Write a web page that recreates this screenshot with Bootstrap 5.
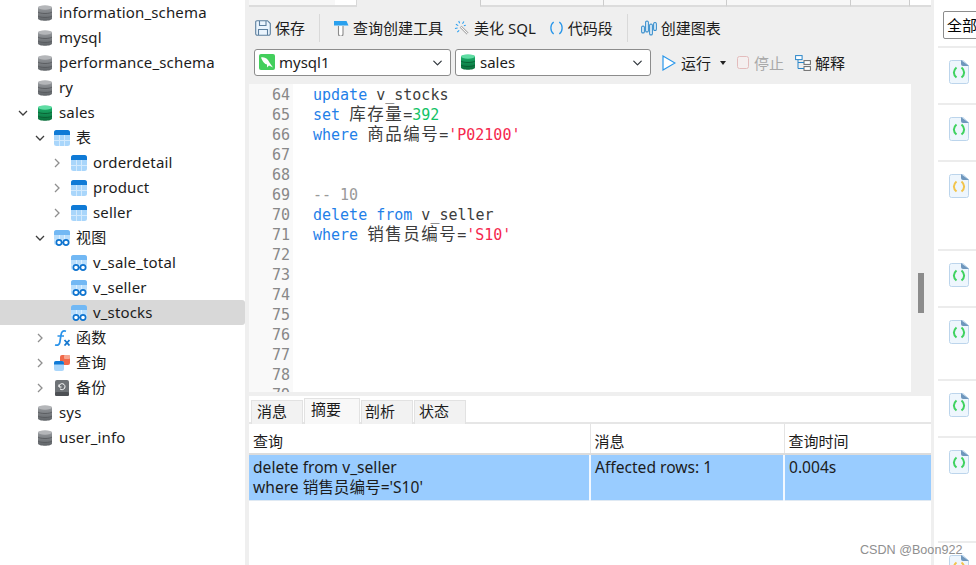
<!DOCTYPE html>
<html lang="zh"><head><meta charset="utf-8"><title>Navicat</title>
<link href="https://cdn.jsdelivr.net/npm/bootstrap@5.3.0/dist/css/bootstrap.min.css" rel="stylesheet">
<style>
html,body{height:565px;overflow:hidden}
body{font-family:"Noto Sans","Noto Sans CJK SC",sans-serif;font-size:15px;color:#1c1c1c;background:#efefef;line-height:20px}
.shell{height:565px;position:relative;overflow:hidden}
.side{width:245px;flex:none;background:#fff;padding-top:0;letter-spacing:.16px}
.tnode{height:25px;white-space:nowrap;padding-bottom:2px}
.l1{padding-left:15px}.l2{padding-left:32px}.l3{padding-left:49px}
.chev{width:16px;flex:none;display:flex;justify-content:center;margin-top:2px}
.tico{width:16px;height:16px;flex:none;margin:2px 6px 0}
.tnode.on{background:#d8d8d8;border-radius:0 3px 3px 0}
.mainp{width:689px;flex:none;padding:0 3px 0 4px}
.strip{height:7px;display:flex;margin-right:0}
.sg{background:#f7f7f7;border-bottom:2px solid #dcdcdc;height:7px}
.sw{background:#fff;border-bottom:2px solid #dcdcdc;height:7px}
.s1{width:86px}.s2{width:22px;border-right:1px solid #d8d8d8}.s3{width:123px;background:transparent;border:0}
.s4{width:123px;border-left:1px solid #ccc}.s5{width:123px;border-left:1px solid #ccc}.s6{width:124px;border-left:1px solid #ccc}.s7{width:59px;border-left:1px solid #ccc}.s8{width:22px;border-left:1px solid #ccc}
.tools{height:41px;padding-left:6px}
.tbtn{display:flex;align-items:center;gap:4px;white-space:nowrap}
.tsep{width:1px;height:28px;background:#d9d9d9}
.m1{margin-left:14px}.m2{margin-left:13px}.m3{margin-left:11px}.m4{margin-left:13px}.m5{margin-left:14px}.m6{margin-left:13px}
.pick{height:36px;padding:1px 0 8px 5px}
.cmb{width:197px;height:27px;position:relative;margin-right:4px}
.cmb2{width:196px}
.cmb .form-select{height:27px;padding:0 24px 0 24px;font-size:15px;line-height:25px;color:#1c1c1c;border:1px solid #8c8c8c;border-radius:3px;background-position:right 6px center;background-size:13px 10px;font-family:inherit}
.cmbico{position:absolute;left:5px;top:5px;width:16px;height:16px}
.runb{gap:5px}
.r1{margin-left:7px}.r2{margin-left:9px}.r3{margin-left:11px}.r4{margin-left:11px}
.mute{color:#a9a9a9}
.carett{width:0;height:0;border-left:3px solid transparent;border-right:3px solid transparent;border-top:4px solid #222}
.edrow{height:308px}
.ed{width:662px;background:#fff;overflow:hidden;height:308px}
.gut{width:44px;background:#f9f9f9;flex:none;color:#888;text-align:right;padding:1px 3px 0 0}
.codebox{font-family:"DejaVu Sans Mono","Noto Sans CJK SC",monospace;font-size:15px;line-height:20px}
.gut div,.src div{height:20px;white-space:pre}
.src{padding:1px 0 0 20px;color:#3c3c3c}
.kw{color:#1f80e8}.str{color:#f5284e}.num{color:#13c266}.cmt{color:#9a9a9a}
.cj{font-size:16.5px;letter-spacing:1.5px}
.track{width:20px;background:#efefef}
.thumb{width:6px;height:40px;background:#8c8c8c;margin:189px 0 0 7px}
.res{margin-top:4px;background:#fff;height:169px}
.rtabs{height:28px;padding:2px 0 0 2px;border-bottom:2px solid #e6e6e6;gap:1px;flex-wrap:nowrap}
.rtabs .nav-link{font-size:15px;line-height:20px;color:#1c1c1c;background:#f2f2f2;border:1px solid #e2e2e2;border-bottom:0;border-radius:0;padding:0 0 0 5px;height:24px;margin-top:2px;width:52px;text-align:left;white-space:nowrap}
.rtabs .nav-link.active{background:#f8f8f8;margin-top:0;height:26px;width:56px;padding:0 0 0 6px;color:#1c1c1c}
.rtabs .nav-item:nth-child(3) .nav-link{padding-left:3px}
.rtabs .nav-item:nth-child(4) .nav-link{padding-left:4px}
.rtbl{table-layout:fixed;width:682px;margin:0;border-collapse:collapse;font-size:15.6px;line-height:20px}
.rtbl th{font-weight:400;height:30px;padding:7px 4px 1px;border-bottom:2px solid #dcdcdc;border-right:1px solid #e4e4e4;color:#1c1c1c;vertical-align:top;background:#fff;box-shadow:none;font-size:15px}
.rtbl td{height:45px;padding:2px 4px 3px;background:#99ccff;border-right:2px solid #f2f8ff;border-bottom:1px solid #dfe9f3;color:#1c1c1c;vertical-align:top;box-shadow:none}
.rtbl tr>*:last-child{border-right:0}
.c1{width:341px}.c2{width:194px}
.rpanel{flex:1;background:#fff;padding-left:4px;overflow:hidden}
.rfilter{height:48px;padding:11px 0 0 5px;border-bottom:2px solid #ececec}
.rbox{width:50px;height:28px;border:1px solid #8c8c8c;border-radius:2px;font-size:15px;padding:3px 3px;line-height:20px;color:#000;white-space:nowrap;background:#fff}
.fitem{border-bottom:2px solid #ececec;padding:12px 0 0 11px}
.h57{height:57px}.h89{height:89px}.h73{height:73px}.h105{height:105px}
.fico{display:block;width:20px;height:24px}
.mark2{position:absolute;left:860px;top:542px;font-family:"Liberation Sans",sans-serif;font-size:12.6px;line-height:16px;color:#8a8a8a;white-space:nowrap;opacity:.95}
</style></head><body>
<svg width="0" height="0" class="position-absolute">
<defs>
<linearGradient id="gg" x1="0" y1="0" x2="0" y2="1"><stop offset="0" stop-color="#9a9da1"/><stop offset="1" stop-color="#5f6367"/></linearGradient>
<linearGradient id="gn" x1="0" y1="0" x2="0" y2="1"><stop offset="0" stop-color="#1db46f"/><stop offset="1" stop-color="#0a6e3a"/></linearGradient>
<symbol id="dbg" viewBox="0 0 16 16"><path d="M1 2.500C1 .500 15 .500 15 2.500V13.500C15 16.500 1 16.500 1 13.500Z" fill="url(#gg)"/><ellipse cx="8" cy="2.500" rx="7" ry="2.200" fill="#b4b6b9"/><path d="M1 7c2 2 12 2 14 0M1 11c2 2 12 2 14 0" stroke="#54575b" stroke-width=".8" fill="none"/></symbol>
<symbol id="dbn" viewBox="0 0 16 16"><path d="M1 2.500C1 .500 15 .500 15 2.500V13.500C15 16.500 1 16.500 1 13.500Z" fill="url(#gn)"/><ellipse cx="8" cy="2.500" rx="7" ry="2.200" fill="#5fdca3"/><path d="M1 7c2 2 12 2 14 0M1 11c2 2 12 2 14 0" stroke="#08592f" stroke-width=".8" fill="none"/></symbol>
<symbol id="tb" viewBox="0 0 16 16"><rect x="0" y="0" width="16" height="16" rx="2.500" fill="#a9d6fb"/><path d="M0 5V2.500A2.500 2.500 0 0 1 2.500 0H13.500A2.500 2.500 0 0 1 16 2.500V5Z" fill="#0f7ad6"/><path d="M5.500 5V16M10.500 5V16M0 10.500H16" stroke="#d3eafd" stroke-width="1"/></symbol>
<symbol id="vw" viewBox="0 0 16 16"><rect x="0" y="0" width="16" height="15" rx="2.500" fill="#b9defc"/><path d="M0 5V2.500A2.500 2.500 0 0 1 2.500 0H13.500A2.500 2.500 0 0 1 16 2.500V5Z" fill="#72b8f4"/><path d="M5.500 5V15M10.500 5V15M0 10H16" stroke="#dcefff" stroke-width="1"/><circle cx="5" cy="12.500" r="2.600" fill="#fff" stroke="#0f74cf" stroke-width="1.600"/><circle cx="12" cy="12.500" r="2.600" fill="#fff" stroke="#0f74cf" stroke-width="1.600"/><path d="M7.500 12.500h2" stroke="#0f74cf" stroke-width="1.400"/></symbol>
<symbol id="cd" viewBox="0 0 10 10"><path d="M1 3L5 7 9 3" fill="none" stroke="#3d3d3d" stroke-width="1.300"/></symbol>
<symbol id="cr" viewBox="0 0 10 10"><path d="M3 1L7 5 3 9" fill="none" stroke="#8f8f8f" stroke-width="1.300"/></symbol>
<symbol id="fl" viewBox="0 0 20 24"><path d="M2.500.500H14L19.500 5.500V21.500a2 2 0 0 1-2 2H2.500a2 2 0 0 1-2-2V2.500a2 2 0 0 1 2-2Z" fill="#eef6fd" stroke="#bcd5ec"/><path d="M12 0L20 6H14a2 2 0 0 1-2-2Z" fill="#6f97bd"/></symbol>
</defs></svg>
<div class="shell d-flex">
 <div class="side">
  <div class="tnode l1 d-flex align-items-center"><span class="chev"></span><svg class="tico"><use href="#dbg"/></svg>information_schema</div>
  <div class="tnode l1 d-flex align-items-center"><span class="chev"></span><svg class="tico"><use href="#dbg"/></svg>mysql</div>
  <div class="tnode l1 d-flex align-items-center"><span class="chev"></span><svg class="tico"><use href="#dbg"/></svg>performance_schema</div>
  <div class="tnode l1 d-flex align-items-center"><span class="chev"></span><svg class="tico"><use href="#dbg"/></svg>ry</div>
  <div class="tnode l1 d-flex align-items-center"><span class="chev"><svg width="10" height="10"><use href="#cd"/></svg></span><svg class="tico"><use href="#dbn"/></svg>sales</div>
  <div class="tnode l2 d-flex align-items-center"><span class="chev"><svg width="10" height="10"><use href="#cd"/></svg></span><svg class="tico"><use href="#tb"/></svg>表</div>
  <div class="tnode l3 d-flex align-items-center"><span class="chev"><svg width="10" height="10"><use href="#cr"/></svg></span><svg class="tico"><use href="#tb"/></svg>orderdetail</div>
  <div class="tnode l3 d-flex align-items-center"><span class="chev"><svg width="10" height="10"><use href="#cr"/></svg></span><svg class="tico"><use href="#tb"/></svg>product</div>
  <div class="tnode l3 d-flex align-items-center"><span class="chev"><svg width="10" height="10"><use href="#cr"/></svg></span><svg class="tico"><use href="#tb"/></svg>seller</div>
  <div class="tnode l2 d-flex align-items-center"><span class="chev"><svg width="10" height="10"><use href="#cd"/></svg></span><svg class="tico"><use href="#vw"/></svg>视图</div>
  <div class="tnode l3 d-flex align-items-center"><span class="chev"></span><svg class="tico"><use href="#vw"/></svg>v_sale_total</div>
  <div class="tnode l3 d-flex align-items-center"><span class="chev"></span><svg class="tico"><use href="#vw"/></svg>v_seller</div>
  <div class="tnode l3 on d-flex align-items-center"><span class="chev"></span><svg class="tico"><use href="#vw"/></svg>v_stocks</div>
  <div class="tnode l2 d-flex align-items-center"><span class="chev"><svg width="10" height="10"><use href="#cr"/></svg></span><svg class="tico" viewBox="0 0 16 16"><path d="M12 1.200C8.500.200 7.500 2 7 5L5.800 12.500C5.400 15 3.500 15.500 1 15M3.500 6H10" fill="none" stroke="#2a93ea" stroke-width="1.700"/><path d="M10.500 10L15.500 15.500M15.500 10L10.500 15.500" stroke="#1577cf" stroke-width="1.800"/></svg>函数</div>
  <div class="tnode l2 d-flex align-items-center"><span class="chev"><svg width="10" height="10"><use href="#cr"/></svg></span><svg class="tico" viewBox="0 0 16 16"><rect x="6" y="0" width="10" height="10" rx="2" fill="#f0694a"/><rect x="10" y="0" width="6" height="4" rx="1" fill="#f7a58f"/><rect x="0" y="6" width="10" height="10" rx="2" fill="#a9d6fb"/><path d="M0 9.500V8a2 2 0 0 1 2-2H8a2 2 0 0 1 2 2V9.500Z" fill="#0f7ad6"/></svg>查询</div>
  <div class="tnode l2 d-flex align-items-center"><span class="chev"><svg width="10" height="10"><use href="#cr"/></svg></span><svg class="tico" viewBox="0 0 16 16"><rect x="1" y="0" width="14" height="16" rx="2" fill="#6e7276"/><rect x="1" y="12" width="14" height="4" rx="1.500" fill="#4d5054"/><path d="M5 6.500a3 3 0 1 1 1 2.400M5 4.500V7H7.500" fill="none" stroke="#fff" stroke-width="1"/></svg>备份</div>
  <div class="tnode l1 d-flex align-items-center"><span class="chev"></span><svg class="tico"><use href="#dbg"/></svg>sys</div>
  <div class="tnode l1 d-flex align-items-center"><span class="chev"></span><svg class="tico"><use href="#dbg"/></svg>user_info</div>
 </div>
 <div class="mainp">
  <div class="strip"><div class="sg s1"></div><div class="sw s2"></div><div class="s3"></div><div class="sg s4"></div><div class="sg s5"></div><div class="sg s6"></div><div class="sg s7"></div><div class="sw s8"></div></div>
  <div class="tools d-flex align-items-center">
   <div class="tbtn"><svg width="16" height="16" viewBox="0 0 16 16"><path d="M2 .700H12.500L15.300 3.500V13.500a1.800 1.800 0 0 1-1.800 1.800H2.500a1.800 1.800 0 0 1-1.800-1.800V2A1.300 1.300 0 0 1 2 .700Z" fill="#eaf4fd" stroke="#5c7f9e" stroke-width="1.100"/><path d="M4.500 1V5.500H11V1M3.500 15V9.500H12.500V15" fill="none" stroke="#5c7f9e" stroke-width="1.100"/></svg>保存</div>
   <div class="tsep m1"></div>
   <div class="tbtn m2"><svg width="16" height="16" viewBox="0 0 16 16"><path d="M5.500 6V14a2 2 0 0 0 4.500 0V6" fill="#fff" stroke="#8b8b8b" stroke-width="1.100"/><path d="M1 1H13.500L15.500 5.500H1Z" fill="#29a0ee"/></svg>查询创建工具</div>
   <div class="tbtn m3"><svg width="16" height="16" viewBox="0 0 17 16"><path d="M7 6.500L14.500 14" stroke="#8e8e8e" stroke-width="2.600"/><path d="M7 6.500L14.500 14" stroke="#fff" stroke-width="1.200"/><path d="M2 4L4.500 5.500M5 .500L6 3M10.500 1L9 3.500M1 8.500L3.800 8M3.500 12.500L5.500 10.500M12.500 5L10.500 5.500" stroke="#2a9ff0" stroke-width="1.100"/></svg>美化 SQL</div>
   <div class="tbtn m4"><svg width="15" height="16" viewBox="0 0 16 16"><path d="M5 1.500C1 4.500 1 11.500 5 14.500M11 1.500C15 4.500 15 11.500 11 14.500" fill="none" stroke="#2a97ea" stroke-width="1.400"/></svg>代码段</div>
   <div class="tsep m5"></div>
   <div class="tbtn m6"><svg width="16" height="16" viewBox="0 0 16 16" fill="#fff" stroke="#2a86c9" stroke-width="1.100"><rect x=".700" y="6" width="2.600" height="7" rx="1.300"/><rect x="4.700" y="1" width="2.600" height="11" rx="1.300"/><rect x="8.700" y="4" width="2.600" height="11" rx="1.300"/><rect x="12.700" y="2.500" width="2.600" height="8" rx="1.300"/></svg>创建图表</div>
  </div>
  <div class="pick d-flex align-items-center">
   <div class="cmb"><select class="form-select" aria-label="连接"><option>mysql1</option></select><svg class="cmbico" viewBox="0 0 16 16"><rect width="16" height="16" rx="2" fill="#43cf5c"/><path d="M2 3.500C6 2.500 9 5 10.500 8.500L14 13.500 10 11.500 8 13.500 8 10.500C6 10.500 3.500 7.500 2 3.500Z" fill="#fff"/></svg></div>
   <div class="cmb cmb2"><select class="form-select" aria-label="数据库"><option>sales</option></select><svg class="cmbico"><use href="#dbn"/></svg></div>
   <div class="tbtn runb r1"><svg width="14" height="16" viewBox="0 0 14 16"><path d="M1 1L13 8 1 15Z" fill="#fff" stroke="#2a97ea" stroke-width="1.200"/></svg>运行</div>
   <div class="carett r2"></div>
   <div class="tbtn runb r3 mute"><svg width="12" height="13" viewBox="0 0 12 13"><rect x=".500" y=".500" width="11" height="12" rx="2" fill="#f4efef" stroke="#e3bcbc"/></svg>停止</div>
   <div class="tbtn r4"><svg width="16" height="16" viewBox="0 0 16 16" fill="#fff"><rect x=".600" y=".600" width="6.500" height="4" stroke="#2a86c9"/><rect x="9" y="5.600" width="6.400" height="3.800" stroke="#6b6b6b"/><rect x="9" y="11.600" width="6.400" height="3.800" stroke="#6b6b6b"/><path d="M3 5V13.500H9M3 7.500H9" fill="none" stroke="#2a86c9"/></svg>解释</div>
  </div>
  <div class="edrow d-flex">
   <div class="ed d-flex codebox">
    <div class="gut"><div>64</div><div>65</div><div>66</div><div>67</div><div>68</div><div>69</div><div>70</div><div>71</div><div>72</div><div>73</div><div>74</div><div>75</div><div>76</div><div>77</div><div>78</div><div>79</div></div>
    <div class="src">
     <div><span class="kw">update</span> v_stocks</div>
     <div><span class="kw">set</span> <span class="cj">库存量</span>=<span class="num">392</span></div>
     <div><span class="kw">where</span> <span class="cj">商品编号</span>=<span class="str">'P02100'</span></div>
     <div></div><div></div>
     <div class="cmt">-- 10</div>
     <div><span class="kw">delete</span> <span class="kw">from</span> v_seller</div>
     <div><span class="kw">where</span> <span class="cj">销售员编号</span>=<span class="str">'S10'</span></div>
    </div>
   </div>
   <div class="track"><div class="thumb"></div></div>
  </div>
  <div class="res">
   <ul class="nav rtabs">
    <li class="nav-item"><a class="nav-link" href="#">消息</a></li>
    <li class="nav-item"><a class="nav-link active" href="#">摘要</a></li>
    <li class="nav-item"><a class="nav-link" href="#">剖析</a></li>
    <li class="nav-item"><a class="nav-link" href="#">状态</a></li>
   </ul>
   <table class="table rtbl">
    <thead><tr><th class="c1">查询</th><th class="c2">消息</th><th>查询时间</th></tr></thead>
    <tbody><tr><td>delete from v_seller<br>where 销售员编号='S10'</td><td>Affected rows: 1</td><td>0.004s</td></tr></tbody>
   </table>
  </div>
 </div>
 <div class="rpanel">
  <div class="rfilter"><div class="rbox">全部</div></div>
  <div class="fitem h57"><svg class="fico" viewBox="0 0 20 24"><use href="#fl"/><path d="M7.500 7.500C4 10.500 4 14.500 7.500 17.500M12.500 7.500C16 10.500 16 14.500 12.500 17.500" fill="none" stroke="#3fd25f" stroke-width="2"/></svg></div>
  <div class="fitem h57"><svg class="fico" viewBox="0 0 20 24"><use href="#fl"/><path d="M7.500 7.500C4 10.500 4 14.500 7.500 17.500M12.500 7.500C16 10.500 16 14.500 12.500 17.500" fill="none" stroke="#3fd25f" stroke-width="2"/></svg></div>
  <div class="fitem h89"><svg class="fico" viewBox="0 0 20 24"><use href="#fl"/><path d="M7.500 7.500C4 10.500 4 14.500 7.500 17.500M12.500 7.500C16 10.500 16 14.500 12.500 17.500" fill="none" stroke="#f2c44c" stroke-width="2"/></svg></div>
  <div class="fitem h57"><svg class="fico" viewBox="0 0 20 24"><use href="#fl"/><path d="M7.500 7.500C4 10.500 4 14.500 7.500 17.500M12.500 7.500C16 10.500 16 14.500 12.500 17.500" fill="none" stroke="#3fd25f" stroke-width="2"/></svg></div>
  <div class="fitem h73"><svg class="fico" viewBox="0 0 20 24"><use href="#fl"/><path d="M7.500 7.500C4 10.500 4 14.500 7.500 17.500M12.500 7.500C16 10.500 16 14.500 12.500 17.500" fill="none" stroke="#3fd25f" stroke-width="2"/></svg></div>
  <div class="fitem h57"><svg class="fico" viewBox="0 0 20 24"><use href="#fl"/><path d="M7.500 7.500C4 10.500 4 14.500 7.500 17.500M12.500 7.500C16 10.500 16 14.500 12.500 17.500" fill="none" stroke="#3fd25f" stroke-width="2"/></svg></div>
  <div class="fitem h105"><svg class="fico" viewBox="0 0 20 24"><use href="#fl"/><path d="M7.500 7.500C4 10.500 4 14.500 7.500 17.500M12.500 7.500C16 10.500 16 14.500 12.500 17.500" fill="none" stroke="#3fd25f" stroke-width="2"/></svg></div>
  <div class="fitem h57"><svg class="fico" viewBox="0 0 20 24"><use href="#fl"/><path d="M7.500 7.500C4 10.500 4 14.500 7.500 17.500M12.500 7.500C16 10.500 16 14.500 12.500 17.500" fill="none" stroke="#f2c44c" stroke-width="2"/></svg></div>
 </div>
 <div class="mark2">CSDN @Boon922</div>
</div>
</body></html>
